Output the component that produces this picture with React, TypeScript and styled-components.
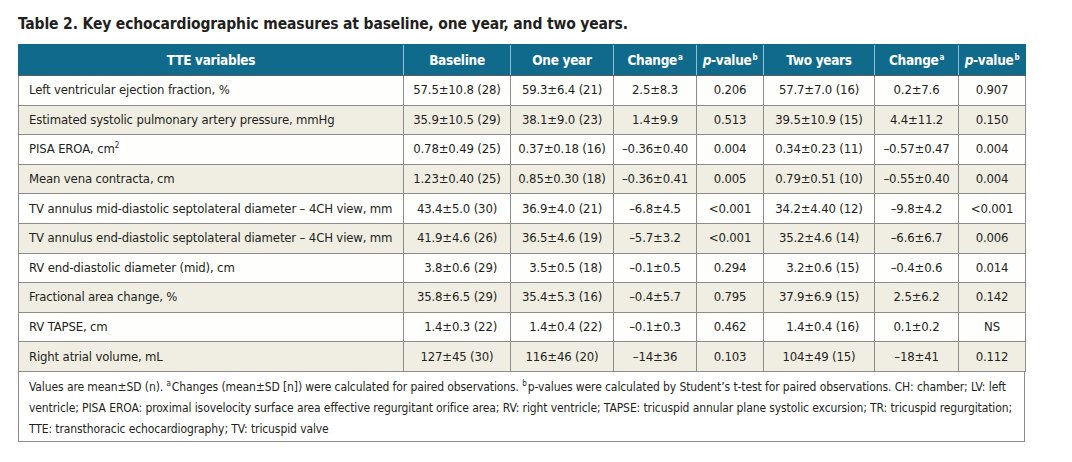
import React from "react";
import styled, { createGlobalStyle } from "styled-components";

const Global = createGlobalStyle`
  html, body { margin: 0; padding: 0; background: #ffffff; }
  body {
    font-family: "DejaVu Sans Condensed", "Liberation Sans Narrow", "Liberation Sans", sans-serif;
    color: #231f20;
  }
`;

const Page = styled.div`
  width: 1072px;
  height: 462px;
  padding: 13px 0 0 18px;
  box-sizing: border-box;
`;

const Title = styled.h1`
  margin: 0 0 9px 0;
  font-size: 15.5px;
  letter-spacing: -0.15px;
  line-height: 22px;
  font-weight: 700;
  color: #231f20;
`;

const Table = styled.table`
  width: 1007px;
  border-collapse: collapse;
  table-layout: fixed;
  font-size: 13px;
  letter-spacing: -0.15px;
`;

const HeadCell = styled.th`
  background: #106a8b;
  color: #ffffff;
  font-weight: 700;
  font-size: 13.5px;
  letter-spacing: -0.3px;
  height: 30px;
  padding: 0 2px;
  text-align: center;
  white-space: nowrap;
  border-left: 1px solid #8fc1d6;
  border-top: 1px solid #106a8b;
  border-bottom: 1px solid #5d5d5d;
  &:first-child { border-left: 1px solid #106a8b; }
  &:last-child { border-right: 1px solid #106a8b; }
  sup { font-size: 8px; vertical-align: 5px; line-height: 0; margin-left: 1px; }
`;

const Row = styled.tr<{ $alt: boolean }>`
  background: ${(p) => (p.$alt ? "#f0eee3" : "#fefefc")};
`;

const Cell = styled.td<{ $label?: boolean }>`
  height: 28.6px;
  padding: 0 ${(p) => (p.$label ? "10px" : "2px")};
  text-align: ${(p) => (p.$label ? "left" : "center")};
  white-space: nowrap;
  border: 1px solid #8c8c8c;
  line-height: 18px;
  sup { font-size: 8px; vertical-align: 5px; line-height: 0; }
`;

const Italic = styled.i`
  font-style: italic;
`;

const Note = styled.div`
  width: 1007px;
  box-sizing: border-box;
  border: 1px solid #8c8c8c;
  border-top: none;
  padding: 5px 10px 1px 10px;
  font-size: 12px;
  letter-spacing: -0.1px;
  line-height: 21px;
  sup { font-size: 8px; vertical-align: 5px; line-height: 0; margin-right: 1px; }
`;

type R = [string, string, string, string, string, string, string, string];

const F = "\u2007";

const rows: R[] = [
  ["Left ventricular ejection fraction, %", "57.5±10.8 (28)", "59.3±6.4 (21)", "2.5±8.3", "0.206", "57.7±7.0 (16)", "0.2±7.6", "0.907"],
  ["Estimated systolic pulmonary artery pressure, mmHg", "35.9±10.5 (29)", "38.1±9.0 (23)", "1.4±9.9", "0.513", "39.5±10.9 (15)", "4.4±11.2", "0.150"],
  ["PISA EROA, cm²", "0.78±0.49 (25)", "0.37±0.18 (16)", "–0.36±0.40", "0.004", "0.34±0.23 (11)", "–0.57±0.47", "0.004"],
  ["Mean vena contracta, cm", "1.23±0.40 (25)", "0.85±0.30 (18)", "–0.36±0.41", "0.005", "0.79±0.51 (10)", "–0.55±0.40", "0.004"],
  ["TV annulus mid-diastolic septolateral diameter – 4CH view, mm", "43.4±5.0 (30)", "36.9±4.0 (21)", "–6.8±4.5", "<0.001", "34.2±4.40 (12)", "–9.8±4.2", "<0.001"],
  ["TV annulus end-diastolic septolateral diameter – 4CH view, mm", "41.9±4.6 (26)", "36.5±4.6 (19)", "–5.7±3.2", "<0.001", "35.2±4.6 (14)", "–6.6±6.7", "0.006"],
  ["RV end-diastolic diameter (mid), cm", F + "3.8±0.6 (29)", F + "3.5±0.5 (18)", "–0.1±0.5", "0.294", F + "3.2±0.6 (15)", "–0.4±0.6", "0.014"],
  ["Fractional area change, %", "35.8±6.5 (29)", "35.4±5.3 (16)", "–0.4±5.7", "0.795", "37.9±6.9 (15)", "2.5±6.2", "0.142"],
  ["RV TAPSE, cm", F + "1.4±0.3 (22)", F + "1.4±0.4 (22)", "–0.1±0.3", "0.462", F + "1.4±0.4 (16)", "0.1±0.2", "NS"],
  ["Right atrial volume, mL", "127±45 (30)", "116±46 (20)", "–14±36", "0.103", "104±49 (15)", "–18±41", "0.112"],
];

const widths = [385, 107, 103, 83, 67, 111, 84, 67];

export default function App() {
  return (
    <Page>
      <Global />
      <Title>Table 2. Key echocardiographic measures at baseline, one year, and two years.</Title>
      <Table>
        <colgroup>
          {widths.map((w, i) => (
            <col key={i} style={{ width: w }} />
          ))}
        </colgroup>
        <thead>
          <tr>
            <HeadCell>TTE variables</HeadCell>
            <HeadCell>Baseline</HeadCell>
            <HeadCell>One year</HeadCell>
            <HeadCell>Change<sup>a</sup></HeadCell>
            <HeadCell><Italic>p</Italic>-value<sup>b</sup></HeadCell>
            <HeadCell>Two years</HeadCell>
            <HeadCell>Change<sup>a</sup></HeadCell>
            <HeadCell><Italic>p</Italic>-value<sup>b</sup></HeadCell>
          </tr>
        </thead>
        <tbody>
          {rows.map((r, i) => (
            <Row key={i} $alt={i % 2 === 1}>
              {r.map((c, j) => (
                <Cell key={j} $label={j === 0}>
                  {j === 0 && c.endsWith("cm²") ? (
                    <>
                      PISA EROA, cm<sup>2</sup>
                    </>
                  ) : (
                    c
                  )}
                </Cell>
              ))}
            </Row>
          ))}
        </tbody>
      </Table>
      <Note>
        Values are mean±SD (n). <sup>a</sup>Changes (mean±SD [n]) were calculated for paired observations.{" "}
        <sup>b</sup>p-values were calculated by Student’s t-test for paired observations. CH: chamber; LV: left
        ventricle; PISA EROA: proximal isovelocity surface area effective regurgitant orifice area; RV: right
        ventricle; TAPSE: tricuspid annular plane systolic excursion; TR: tricuspid regurgitation; TTE:
        transthoracic echocardiography; TV: tricuspid valve
      </Note>
    </Page>
  );
}
